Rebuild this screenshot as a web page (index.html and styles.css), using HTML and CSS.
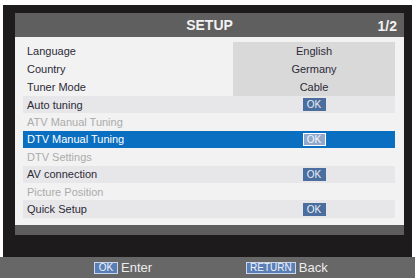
FILE: index.html
```html
<!DOCTYPE html>
<html>
<head>
<meta charset="utf-8">
<link rel="stylesheet" href="styles.css">
</head>
<body>
<div class="screen">
  <div class="tv">
    <div class="panel">
      <div class="header">
        <span class="title">SETUP</span>
        <span class="page-num">1/2</span>
      </div>
      <div class="body">
        <div class="row tall"><span class="label">Language</span><span class="value">English</span></div>
        <div class="row tall"><span class="label">Country</span><span class="value">Germany</span></div>
        <div class="row tall"><span class="label">Tuner Mode</span><span class="value">Cable</span></div>
        <div class="row band"><span class="label">Auto tuning</span><span class="cell"><span class="ok">OK</span></span></div>
        <div class="row disabled"><span class="label">ATV Manual Tuning</span><span class="cell"></span></div>
        <div class="row selected"><span class="label">DTV Manual Tuning</span><span class="cell"><span class="ok">OK</span></span></div>
        <div class="row disabled"><span class="label">DTV Settings</span><span class="cell"></span></div>
        <div class="row band"><span class="label">AV connection</span><span class="cell"><span class="ok">OK</span></span></div>
        <div class="row disabled"><span class="label">Picture Position</span><span class="cell"></span></div>
        <div class="row band"><span class="label">Quick Setup</span><span class="cell"><span class="ok">OK</span></span></div>
      </div>
      <div class="strip"></div>
    </div>
  </div>
  <div class="footer">
    <span class="hint"><span class="key">OK</span>Enter</span>
    <span class="hint"><span class="key">RETURN</span>Back</span>
  </div>
</div>
</body>
</html>
```

FILE: styles.css
```css
html, body {
  margin: 0;
  padding: 0;
  background: #ffffff;
}
.screen {
  width: 415px;
  height: 278px;
  display: flex;
  flex-direction: column;
  font-family: "Liberation Sans", Arial, sans-serif;
  overflow: hidden;
}
.tv {
  margin: 5px 3px 0 3px;
  height: 252px;
  background: #1e1b1c;
  padding: 8px 8px 0 12px;
  box-sizing: border-box;
}
.panel {
  display: flex;
  flex-direction: column;
}
.header {
  height: 24px;
  background: #5f5f5f;
  position: relative;
  display: flex;
  align-items: center;
  justify-content: center;
  color: #f2f2f2;
  font-weight: bold;
  font-size: 14px;
}
.page-num {
  position: absolute;
  right: 7px;
  top: 5px;
}
.body {
  height: 188px;
  background: #f2f2f2;
  padding: 5px 9px 0 8px;
  box-sizing: border-box;
}
.row {
  display: grid;
  grid-template-columns: 1fr 162px;
  height: 17.4px;
  align-items: center;
  font-size: 11px;
  color: #2c2a38;
}
.row.tall {
  height: 18px;
}
.label {
  padding-left: 4px;
}
.value {
  background: #d9d9d9;
  height: 100%;
  display: flex;
  align-items: center;
  justify-content: center;
}
.cell {
  display: flex;
  justify-content: center;
  align-items: center;
}
.band {
  background: #e7e7e9;
}
.disabled {
  color: #ababab;
}
.selected {
  background: #0a6fc0;
  color: #ffffff;
}
.ok {
  display: inline-block;
  width: 23px;
  height: 13px;
  line-height: 13px;
  text-align: center;
  background: #4b6e9f;
  color: #e8eef8;
  font-size: 10px;
  box-sizing: border-box;
}
.selected .ok {
  background: #90a9cd;
  border: 1px solid #ffffff;
  line-height: 11px;
  color: #f4f6fa;
}
.strip {
  height: 10px;
  background: #5d5d5d;
}
.footer {
  flex: 1;
  background: #676767;
  display: flex;
  align-items: center;
  padding-left: 94px;
  gap: 94px;
  color: #ececec;
  font-size: 13px;
}
.hint {
  display: flex;
  align-items: center;
}
.key {
  display: inline-block;
  height: 12px;
  line-height: 10px;
  padding: 0 3px;
  margin-right: 3px;
  border: 1px solid #c9d6ea;
  background: #5a7eb6;
  color: #eef2fa;
  font-size: 10px;
  box-sizing: border-box;
}
.hint:first-child .key {
  width: 24px;
  text-align: center;
}
```
